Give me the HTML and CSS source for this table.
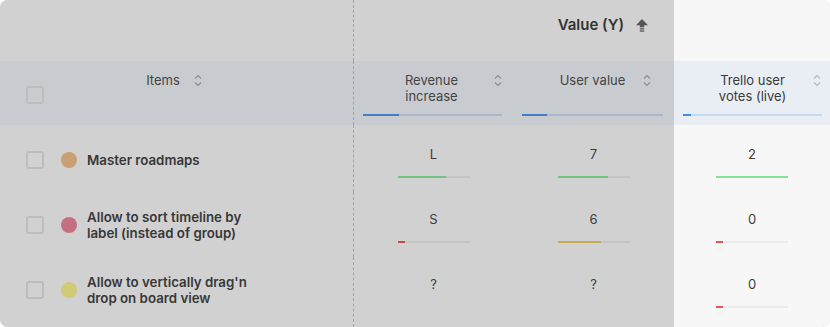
FILE: index.html
```html
<!DOCTYPE html>
<html>
<head>
<meta charset="utf-8">
<link rel="stylesheet" href="styles.css">
</head>
<body>
<div class="card">
  <!-- top group header row -->
  <div class="cell top"></div>
  <div class="cell top group dashed">
    <span class="group-title">Value (Y)</span>
    <svg class="prio" width="12" height="13" viewBox="0 0 12 13"><path d="M6 0 L12 6.2 L8.2 6.2 L8.2 8.2 L3.8 8.2 L3.8 6.2 L0 6.2 Z" fill="#555"/><rect x="3.8" y="9.2" width="4.4" height="1.3" fill="#555"/><rect x="3.8" y="11.4" width="4.4" height="1.3" fill="#555"/></svg>
  </div>
  <div class="cell top light"></div>

  <!-- column headers -->
  <div class="cell head head-items">
    <span class="checkbox"></span>
    <span class="hlabel">Items</span>
    <svg class="sort sort-items" width="8" height="13" viewBox="0 0 8 13"><path d="M1 4.5 L4 1.5 L7 4.5 M1 8.5 L4 11.5 L7 8.5" fill="none" stroke="#8e8e8e" stroke-width="1.2"/></svg>
  </div>
  <div class="cell head dashed">
    <span class="hlabel">Revenue<br>increase</span>
    <svg class="sort sort-rev" width="8" height="13" viewBox="0 0 8 13"><path d="M1 4.5 L4 1.5 L7 4.5 M1 8.5 L4 11.5 L7 8.5" fill="none" stroke="#8e8e8e" stroke-width="1.2"/></svg>
    <div class="hbar"><div class="hfill" style="width:26%"></div></div>
  </div>
  <div class="cell head">
    <span class="hlabel">User value</span>
    <svg class="sort sort-user" width="8" height="13" viewBox="0 0 8 13"><path d="M1 4.5 L4 1.5 L7 4.5 M1 8.5 L4 11.5 L7 8.5" fill="none" stroke="#8e8e8e" stroke-width="1.2"/></svg>
    <div class="hbar"><div class="hfill" style="width:18%"></div></div>
  </div>
  <div class="cell head head-light">
    <span class="hlabel">Trello user<br>votes (live)</span>
    <svg class="sort sort-trello" width="8" height="13" viewBox="0 0 8 13"><path d="M1 4.5 L4 1.5 L7 4.5 M1 8.5 L4 11.5 L7 8.5" fill="none" stroke="#b5b8bd" stroke-width="1.2"/></svg>
    <div class="hbar hbar-light"><div class="hfill hfill-light" style="width:6%"></div></div>
  </div>

  <!-- row 1 -->
  <div class="cell item first">
    <span class="checkbox"></span>
    <span class="dot dot-orange"></span>
    <span class="iname">Master roadmaps</span>
  </div>
  <div class="cell val first dashed">
    <span class="v">L</span>
    <div class="bar"><div class="fill green" style="width:67%"></div></div>
  </div>
  <div class="cell val first">
    <span class="v">7</span>
    <div class="bar"><div class="fill green" style="width:70%"></div></div>
  </div>
  <div class="cell val first light">
    <span class="v">2</span>
    <div class="bar bar-light"><div class="fill green-light" style="width:100%"></div></div>
  </div>

  <!-- row 2 -->
  <div class="cell item">
    <span class="checkbox"></span>
    <span class="dot dot-pink"></span>
    <span class="iname">Allow to sort timeline by label (instead of group)</span>
  </div>
  <div class="cell val dashed">
    <span class="v">S</span>
    <div class="bar"><div class="fill red" style="width:10%"></div></div>
  </div>
  <div class="cell val">
    <span class="v">6</span>
    <div class="bar"><div class="fill yellow" style="width:60%"></div></div>
  </div>
  <div class="cell val light">
    <span class="v">0</span>
    <div class="bar bar-light"><div class="fill red-light" style="width:10%"></div></div>
  </div>

  <!-- row 3 -->
  <div class="cell item last">
    <span class="checkbox"></span>
    <span class="dot dot-yellow"></span>
    <span class="iname">Allow to vertically drag'n drop on board view</span>
  </div>
  <div class="cell val last dashed">
    <span class="v">?</span>
  </div>
  <div class="cell val last">
    <span class="v">?</span>
  </div>
  <div class="cell val last light">
    <span class="v">0</span>
    <div class="bar bar-light"><div class="fill red-light" style="width:10%"></div></div>
  </div>
</div>
</body>
</html>
```

FILE: styles.css
```css
* { box-sizing: border-box; }
html, body { margin: 0; padding: 0; background: #ffffff; }
body {
  font-family: Inter, "Noto Sans", "Liberation Sans", sans-serif;
  font-size: 13px;
  color: #3a3a3a;
}
.card {
  width: 830px;
  height: 327px;
  border-radius: 8px;
  overflow: hidden;
  display: grid;
  grid-template-columns: 353px 160px 161px 156px;
  grid-template-rows: 61px 64px 67px 65px 70px;
  background: #d1d1d1;
}
.cell { background: #d1d1d1; }
.cell.light { background: #f7f7f7; }
.dashed { border-left: 1px dashed #a3a3a3; }

.top.group {
  grid-column: 2 / 4;
  display: flex;
  justify-content: flex-end;
  align-items: flex-start;
  padding: 15px 26px 0 0;
  gap: 12px;
}
.group-title {
  font-weight: 600;
  font-size: 15px;
  line-height: 20px;
  color: #333;
}
.prio { margin-top: 4px; }

.head {
  background: #c8ccd1;
  display: grid;
  grid-template-columns: 1fr auto 1fr;
  grid-template-rows: 1fr auto;
  padding: 11px 11px 9px 9px;
  color: #444;
  line-height: 16px;
}
.head-light { background: #e9eef5; color: #3a3a3a; padding-right: 8px; }
.hlabel { grid-column: 2; grid-row: 1; text-align: center; }
.sort { grid-column: 3; grid-row: 1; justify-self: start; margin-top: 2px; }
.sort-rev { margin-left: 36px; }
.sort-user { margin-left: 18px; }
.sort-trello { margin-left: 27px; }
.hbar {
  grid-column: 1 / 4;
  grid-row: 2;
  height: 2px;
  background: #a9b7c8;
}
.hfill { height: 2px; background: #3f7fc8; }
.hbar-light { background: #c6dbf3; }
.hfill-light { background: #3d8ee8; }

.head-items {
  padding: 11px 27px 9px 0;
}
.head-items .checkbox {
  grid-column: 1; grid-row: 1 / 3;
  justify-self: start; align-self: center;
  margin-left: 26px; margin-top: 1px;
}
.head-items .hlabel { grid-row: 1; }
.sort-items { margin-left: 14px; }

.checkbox {
  width: 18px;
  height: 18px;
  border: 2px solid #bdbdbd;
  border-radius: 3px;
  flex: none;
}

.item {
  display: flex;
  align-items: center;
  padding-left: 26px;
}
.first { padding-top: 2px; }
.last { padding-bottom: 5px; }
.dot {
  width: 16px;
  height: 16px;
  border-radius: 50%;
  margin-left: 17px;
  margin-right: 10px;
  flex: none;
}
.dot-orange { background: #c9a072; }
.dot-pink { background: #c47080; }
.dot-yellow { background: #cfcb77; }
.iname {
  font-weight: 600;
  font-size: 13.3px;
  line-height: 16px;
  width: 176px;
  color: #383838;
}

.val {
  display: flex;
  flex-direction: column;
  align-items: center;
  padding-top: 19px;
}
.val.first { padding-top: 21px; }
.v { line-height: 16px; color: #3c3c3c; }
.bar {
  width: 72px;
  height: 2px;
  margin-top: 14px;
  background: #c4c4c4;
}
.bar-light { background: #ebebeb; }
.fill { height: 2px; }
.green { background: #6fc482; }
.green-light { background: #85e39c; }
.yellow { background: #c8a954; }
.red { background: #c84a45; }
.red-light { background: #e05a53; }
```
